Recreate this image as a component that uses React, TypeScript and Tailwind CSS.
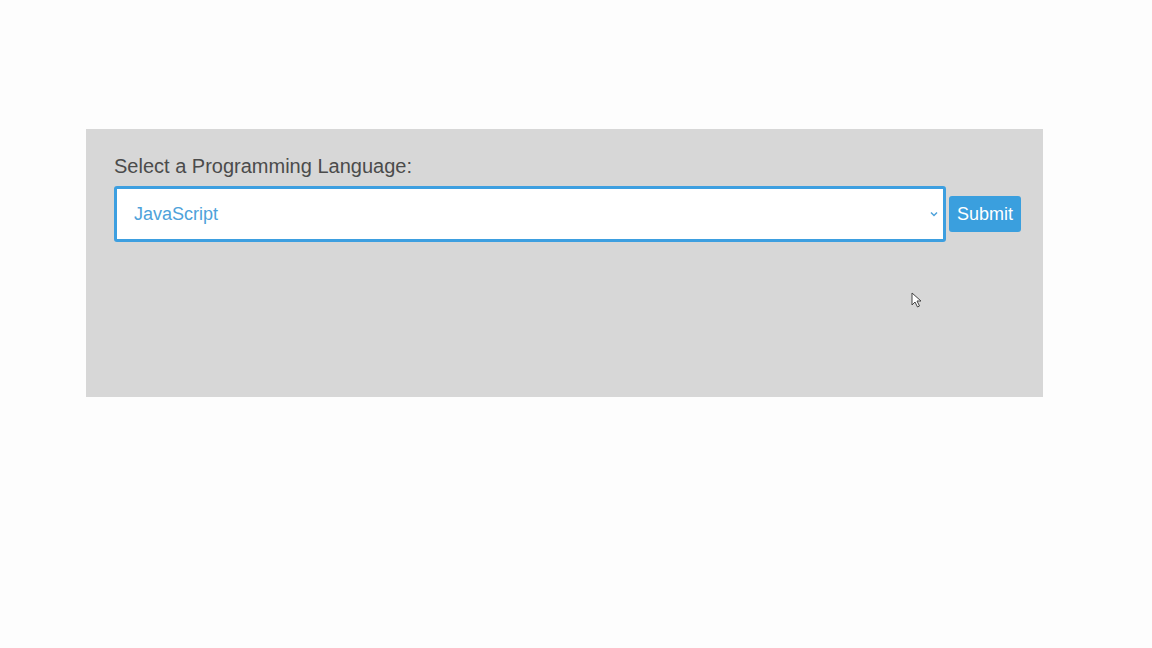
import { useState } from "react";

const LANGUAGES = ["JavaScript", "Python", "Java", "C#", "Ruby", "Go"];

export default function App() {
  const [language, setLanguage] = useState("JavaScript");

  return (
    <div
      className="relative h-[648px] w-[1152px] bg-[#fdfdfd] pl-[86px] pt-[129px]"
      style={{ fontFamily: '"Liberation Sans", Arial, sans-serif' }}
    >
      <div className="h-[268px] w-[957px] bg-[#d7d7d7] pl-[28px] pt-[25px]">
        <label className="block text-[20px] leading-[24px] text-[#4b4b4b]">
          Select a Programming Language:
        </label>
        <div className="mt-[8px] flex items-center gap-[3px]">
          <div className="relative shrink-0">
            <select
              value={language}
              onChange={(e) => setLanguage(e.target.value)}
              className="h-[56px] w-[832px] appearance-none rounded-[3px] border-[3px] border-[#3d9fe0] bg-white pl-[17px] text-[18px] text-[#4ea2da] outline-none"
            >
              {LANGUAGES.map((l) => (
                <option key={l} value={l}>
                  {l}
                </option>
              ))}
            </select>
            <svg
              className="pointer-events-none absolute right-[8px] top-[25px]"
              width="8"
              height="6"
              viewBox="0 0 8 6"
            >
              <path d="M1 1.5 L4 4.5 L7 1.5" fill="none" stroke="#4ea2da" strokeWidth="1.5" />
            </svg>
          </div>
          <button className="h-[36px] w-[72px] shrink-0 rounded-[3px] bg-[#3a9fde] text-[18px] text-white">
            Submit
          </button>
        </div>
      </div>

      {/* mouse cursor */}
      <svg
        className="absolute left-[911px] top-[292px]"
        width="11"
        height="16"
        viewBox="0 0 11 16"
      >
        <path
          d="M1 1 L1 13 L4 10 L6.5 15 L8.5 14 L6 9 L10 9 Z"
          fill="#ffffff"
          stroke="#444"
          strokeWidth="1"
          strokeLinejoin="round"
        />
      </svg>
    </div>
  );
}
